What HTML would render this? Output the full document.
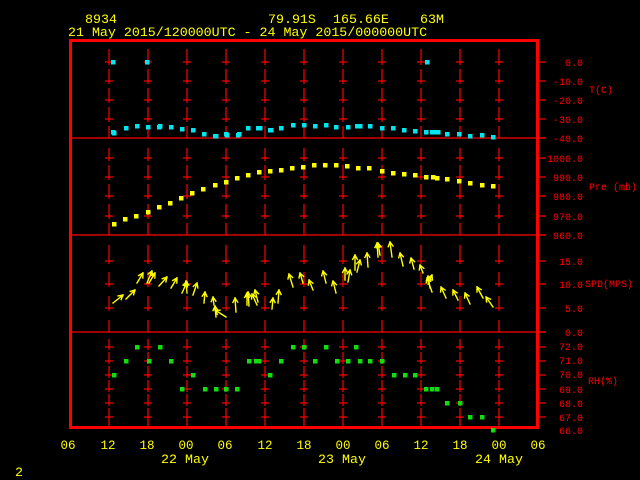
<!DOCTYPE html>
<html><head><meta charset="utf-8"><style>
html,body{margin:0;padding:0;background:#000;width:640px;height:480px;overflow:hidden}
svg{display:block}
.y{fill:#ffff00;font-family:"Liberation Mono",monospace;font-size:13.3px}
.r{fill:#ff0000;font-family:"Liberation Mono",monospace;font-size:10px}
.b{fill:#ffff00;font-family:"Liberation Mono",monospace;font-size:12.5px}
</style></head><body>
<svg id="s" width="640" height="480" xmlns="http://www.w3.org/2000/svg">
<text class="y" x="85" y="23">8934</text>
<text class="y" x="268" y="23">79.91S</text>
<text class="y" x="333" y="23">165.66E</text>
<text class="y" x="420" y="23">63M</text>
<text class="y" x="68" y="36">21 May 2015/120000UTC - 24 May 2015/000000UTC</text>
<rect x="70.5" y="40.5" width="467" height="387" fill="none" stroke="#ff0000" stroke-width="3"/>
<g stroke="#ff0000" stroke-width="1.2">
<line x1="70" y1="138" x2="546" y2="138"/>
<line x1="70" y1="235" x2="546" y2="235"/>
<line x1="70" y1="332" x2="546" y2="332"/>
</g>
<g id="grid" stroke="#ff0000" stroke-width="1.2"></g>
<g class="r" text-anchor="end">
<text x="583" y="66">0.0</text><text x="583" y="85">-10.0</text><text x="583" y="104">-20.0</text><text x="583" y="123">-30.0</text><text x="583" y="142">-40.0</text>
<text x="583" y="162">1000.0</text><text x="583" y="181">990.0</text><text x="583" y="200">980.0</text><text x="583" y="220">970.0</text><text x="583" y="239">960.0</text>
<text x="583" y="265">15.0</text><text x="583" y="288">10.0</text><text x="583" y="312">5.0</text><text x="583" y="336">0.0</text>
<text x="583" y="350">72.0</text><text x="583" y="364">71.0</text><text x="583" y="378">70.0</text><text x="583" y="393">69.0</text><text x="583" y="407">68.0</text><text x="583" y="421">67.0</text><text x="583" y="434">66.0</text>
</g>
<g class="r">
<text x="589" y="93">T(C)</text>
<text x="589" y="190">Pre (mb)</text>
<text x="585" y="287">SPD(MPS)</text>
<text x="588" y="384">RH(%)</text>
</g>
<g id="pts"></g>
<g id="arr" stroke="#ffff00" stroke-width="1.4" fill="none" stroke-linecap="square"></g>
<g class="b" text-anchor="middle">
<text x="68" y="449">06</text><text x="108" y="449">12</text><text x="147" y="449">18</text><text x="186" y="449">00</text><text x="225" y="449">06</text><text x="265" y="449">12</text><text x="304" y="449">18</text><text x="343" y="449">00</text><text x="382" y="449">06</text><text x="421" y="449">12</text><text x="460" y="449">18</text><text x="499" y="449">00</text><text x="538" y="449">06</text>
</g>
<g class="y" text-anchor="middle">
<text x="185" y="463">22 May</text><text x="342" y="463">23 May</text><text x="499" y="463">24 May</text>
</g>
<text class="y" x="15" y="476">2</text>
</svg>
<script>
var NS="http://www.w3.org/2000/svg";
function el(p,t,a){var e=document.createElementNS(NS,t);for(var k in a)e.setAttribute(k,a[k]);p.appendChild(e);return e;}
var g=document.getElementById('grid');
var rows=[[62,81,100,119,138],[158,177,196,216,235],[261,284,308,332],[347,361,375,389,403,417]];
var top0=[49,148,245,339];
rows.forEach(function(r,pi){
 r.forEach(function(y,i){
  for(var k=1;k<=11;k++){var x=70+39*k;
   var y1=(i==0)?top0[pi]:y-(pi==3?9:12), y2=(pi==0&&i==4)||(pi==1&&i==4)||(pi==2&&i==3)?y:y+3;
   el(g,'line',{x1:x,y1:y1,x2:x,y2:y2});
   if(!((pi<2&&i==4)||(pi==2&&i==3)))el(g,'line',{x1:x-4,y1:y,x2:x+4,y2:y});
  }
  el(g,'line',{x1:538,y1:y,x2:546,y2:y});
 });
});
// bottom dashes in RH
for(var k=1;k<=11;k++){var x=70+39*k;el(g,'line',{x1:x,y1:420,x2:x,y2:426});}
var p=document.getElementById('pts');
function sq(x,y,c){el(p,'rect',{x:x-2,y:y-2,width:4.5,height:4.5,fill:c});}
var T=[[113,62],[147,62],[427,62],[113,132],[114,133],[126,128],[137,126],[148,127],[159,127],[160,126],[171,127],[182,129],[193,130],[204,134],[215,136],[216,136],[226,134],[227,135],[238,135],[239,134],[248,128],[258,128],[260,128],[270,130],[271,130],[281,128],[293,125],[304,125],[315,126],[326,125],[336,127],[348,127],[357,126],[360,126],[370,126],[382,128],[393,128],[404,130],[415,131],[426,132],[432,132],[434,132],[438,132],[447,134],[459,134],[470,136],[482,135],[493,137]];
T.forEach(function(a){sq(a[0],a[1],'#00e5ee');});
var P=[[114,224],[125,219],[136,216],[148,212],[159,207],[170,203],[181,198],[192,193],[203,189],[215,185],[226,182],[237,178],[248,175],[259,172],[270,171],[281,170],[292,168],[303,167],[314,165],[325,165],[336,165],[347,166],[358,168],[369,168],[382,171],[393,173],[404,174],[415,175],[426,177],[433,177],[437,178],[447,179],[459,181],[470,183],[482,185],[493,186]];
P.forEach(function(a){sq(a[0],a[1],'#ffff00');});
var R={347:[137,160,293,304,326,356],361:[126,149,171,249,256,259,281,315,337,348,360,370,382],375:[114,193,270,394,405,415],389:[182,205,216,226,237,426,432,437],403:[447,460],417:[470,482],430:[493]};
for(var y in R)R[y].forEach(function(x){sq(x,+y,'#11dd11');});
var a=document.getElementById('arr');
var A=[[113,303,123,295],[126,299,135,290],[137,283,143,273],[147,283,152,271],[149,283,155,273],[159,286,167,277],[171,288,177,278],[182,293,187,282],[187,293,186,281],[193,295,197,283],[204,303,205,292],[214,305,213,297],[226,317,215,310],[216,317,215,306],[236,312,235,298],[247,305,247,293],[249,306,248,292],[258,302,255,290],[257,305,252,294],[272,309,273,298],[278,303,279,290],[293,287,289,274],[303,283,300,273],[313,290,309,280],[326,283,323,271],[336,293,333,281],[345,280,345,268],[348,282,350,270],[355,270,355,255],[357,272,360,260],[368,267,367,253],[378,257,377,243],[380,255,378,243],[392,257,390,242],[403,266,400,253],[414,269,411,258],[423,273,420,265],[432,292,427,278],[430,288,428,276],[428,284,432,275],[446,298,441,287],[458,300,453,290],[470,304,465,293],[483,298,477,287],[493,307,486,297]];
A.forEach(function(v){
 var x1=v[0],y1=v[1],x2=v[2],y2=v[3];var ang=Math.atan2(y1-y2,x1-x2);
 var d='M'+x1+' '+y1+'L'+x2+' '+y2;
 [0.5,-0.5].forEach(function(s){d+='M'+x2+' '+y2+'L'+(x2+5*Math.cos(ang+s)).toFixed(1)+' '+(y2+5*Math.sin(ang+s)).toFixed(1);});
 el(a,'path',{d:d});
});
</script>
</body></html>
